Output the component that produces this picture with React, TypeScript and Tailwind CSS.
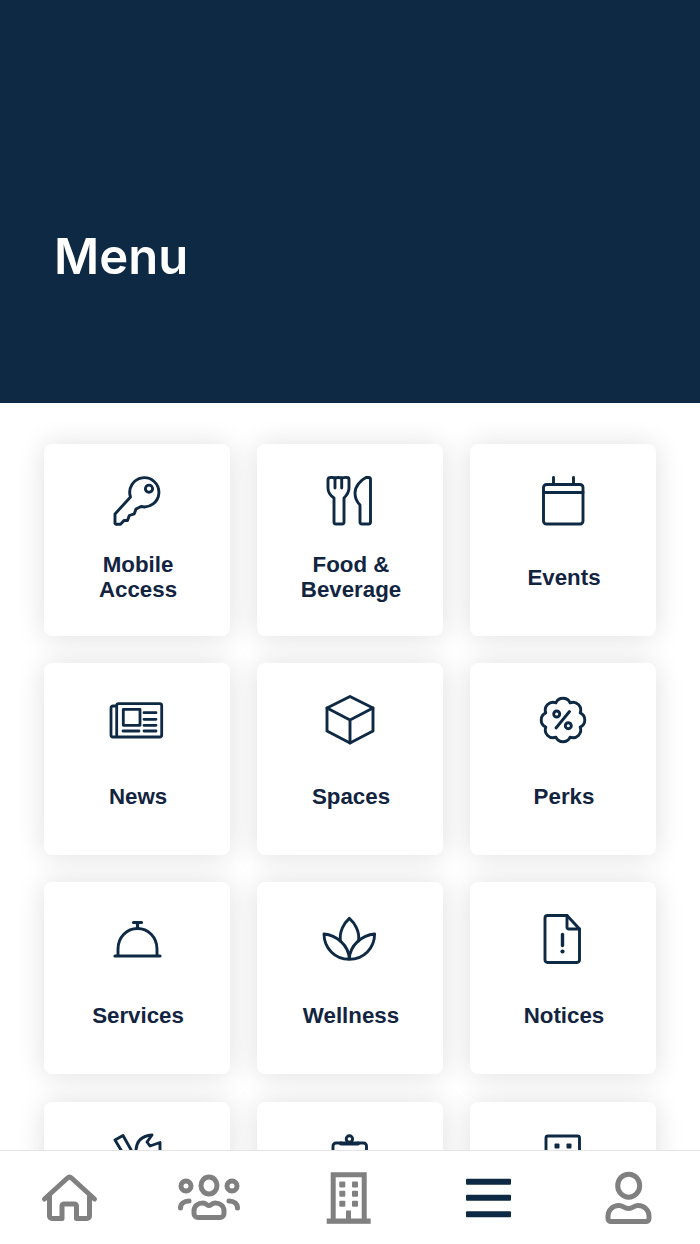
import type { ReactNode } from 'react'

const NAVY = '#0e2943'
const GREY = '#808080'

function flowerPath(cx: number, cy: number, r: number, n: number, bump: number) {
  let d = ''
  for (let i = 0; i <= n; i++) {
    const a = ((i - 0.5) / n) * Math.PI * 2 - Math.PI / 2
    const x = (cx + r * Math.cos(a)).toFixed(2)
    const y = (cy + r * Math.sin(a)).toFixed(2)
    d += i === 0 ? `M${x} ${y}` : `A${bump} ${bump} 0 0 1 ${x} ${y}`
  }
  return `${d}Z`
}

function Icon({ children, width = 2.9, color = NAVY }: { children: ReactNode; width?: number; color?: string }) {
  return (
    <svg
      viewBox="0 0 60 60"
      className="h-[60px] w-[60px] shrink-0 overflow-visible"
      fill="none"
      stroke={color}
      strokeWidth={width}
      strokeLinecap="round"
      strokeLinejoin="round"
    >
      {children}
    </svg>
  )
}

const KeyIcon = () => (
  <Icon>
    <path d="M8 53.5V44L23.5 27A14.6 14.6 0 1 1 34 36.5L29 39L27.3 43.8L22.3 45.5L20.5 50.5H17L13.5 54.3H8.8Z" />
    <circle cx="42" cy="18.7" r="3.6" />
  </Icon>
)

const FoodIcon = () => (
  <Icon>
    <path d="M10.5 7.5C12 7 13 7.5 14.8 8C16.5 7.5 20 7.5 21.8 8C23.5 7.5 25 7 27 7.5a2 2 0 0 1 2 2V18c0 5-3 8-5 10V52a2 2 0 0 1-2 2H16a2 2 0 0 1-2-2V28C11 26 8 23 8 18V10a2.5 2.5 0 0 1 2.5-2.5Z" />
    <path d="M15 8V18M21.7 8V18" />
    <path d="M48.5 7.5a2 2 0 0 1 2 2V52a2 2 0 0 1-2 2H42a2 2 0 0 1-2-2V35C38 33 35 28 35 23C35 16 41 10 46 7.5Z" />
  </Icon>
)

const EventsIcon = () => (
  <Icon>
    <rect x="10.5" y="14.5" width="39.5" height="39.5" rx="3" />
    <path d="M10.5 22.5H50M20.5 7.5V14.5M40.5 7.5V14.5" />
  </Icon>
)

const NewsIcon = () => (
  <Icon width={2.8}>
    <g transform="translate(0 1)">
      <path d="M9.7 16H6a2 2 0 0 0-2 2V45a2 2 0 0 0 2 2H52.7a2 2 0 0 0 2-2V15.7a2 2 0 0 0-2-2H11.7a2 2 0 0 0-2 2V47" />
      <rect x="16.3" y="19.3" width="16.7" height="16" />
      <path d="M37 22.7H49M37 29.3H49M37 35.3H49M16 41H32M37 41H49" />
    </g>
  </Icon>
)

const SpacesIcon = () => (
  <Icon>
    <path d="M30 7.5L53 19V42L30 54L7 42V19Z" />
    <path d="M7 19L30 31L53 19M30 31V54" />
  </Icon>
)

const PerksIcon = () => (
  <Icon>
    <path d={flowerPath(30, 31, 18.6, 8, 7.8)} />
    <circle cx="23.7" cy="25" r="3" />
    <circle cx="35.3" cy="36.7" r="3" />
    <path d="M36.5 22.5L23 39" />
  </Icon>
)

const ServicesIcon = () => (
  <Icon>
    <path d="M26.5 14.5H34.5M30.5 14.5V20" strokeWidth={3.2} />
    <path d="M11 47V41C11 29 20 20.5 30.5 20.5C41 20.5 50 29 50 41V47" />
    <path d="M8 48H53" strokeWidth={3.2} />
  </Icon>
)

const WellnessIcon = () => (
  <Icon>
    <path d="M4 26C4 40 15 51.3 29.3 51.3C43.7 51.3 54.6 40 54.6 26C42.5 27 29.6 37 29.3 51.3C29 37 16 27 4 26Z" />
    <path d="M20.5 33C19 24 24 15 29.3 10.3C35 15 40 24 38.5 33" />
  </Icon>
)

const NoticesIcon = () => (
  <Icon>
    <path d="M14.5 7.5H34L46.5 21V52a2.5 2.5 0 0 1-2.5 2.5H14.5A2.5 2.5 0 0 1 12 52V10a2.5 2.5 0 0 1 2.5-2.5Z" />
    <path d="M34 7.5V19a2 2 0 0 0 2 2H46.5" />
    <path d="M29.5 26.5V37.5" strokeWidth={3.4} />
    <circle cx="29.5" cy="43.5" r="2.1" fill={NAVY} stroke="none" />
  </Icon>
)

const ToolsIcon = () => (
  <Icon>
    <path d="M8 12L16 7.5L27 27M8 12L20 32" />
    <path d="M29 27C28 15 33 8 45 7L40 14L43 18L53 14.5V28" />
  </Icon>
)

const ClipboardIcon = () => (
  <Icon>
    <path d="M21 15H16a3 3 0 0 0-3 3V40M38 15H43.5a3 3 0 0 1 3 3V40" />
    <path d="M21 15.5H38" strokeWidth={4} />
    <circle cx="29.4" cy="11" r="3.2" />
  </Icon>
)

const BuildingIcon = () => (
  <Icon>
    <path d="M13 40V10a2 2 0 0 1 2-2H44.5a2 2 0 0 1 2 2V40" />
    <rect x="21.5" y="15.5" width="5" height="5" rx="1" fill={NAVY} stroke="none" />
    <rect x="33.5" y="15.5" width="5" height="5" rx="1" fill={NAVY} stroke="none" />
  </Icon>
)

const NavHome = () => (
  <Icon width={5} color={GREY}>
    <path d="M4.5 31L27.5 10a3 3 0 0 1 4 0L54.5 31" />
    <path d="M9.5 27V48a2.5 2.5 0 0 0 2.5 2.5H22V38a2 2 0 0 1 2-2H34.5a2 2 0 0 1 2 2V50.5H47a2.5 2.5 0 0 0 2.5-2.5V27" />
  </Icon>
)

const NavTeam = () => (
  <Icon width={5} color={GREY}>
    <ellipse cx="29" cy="17.5" rx="8" ry="8.5" />
    <circle cx="6" cy="18" r="5" />
    <circle cx="52" cy="18" r="5" />
    <path d="M19 49.5H40a4 4 0 0 0 4-4V43c0-5-4-8-9-8c-3 0-4 2.5-6 2.5c-2 0-3-2.5-6-2.5c-5 0-9 3-9 8V45.5a4 4 0 0 0 4 4Z" />
    <path d="M0.5 40C0.5 36 4 33 9 33M49 33C54 33 57.5 36 57.5 40" />
  </Icon>
)

const NavBuilding = () => (
  <Icon width={5} color={GREY}>
    <path d="M13.2 51V6.8H44.2V51" strokeLinecap="butt" strokeLinejoin="miter" />
    <rect x="6.7" y="50.5" width="44" height="5.3" fill={GREY} stroke="none" />
    <rect x="26" y="42.5" width="5" height="9" fill={GREY} stroke="none" />
    {[16.5, 25.8, 35.8].map(y => (
      <g key={y}>
        <rect x="19.3" y={y - 3} width="6" height="6" rx="1" fill={GREY} stroke="none" />
        <rect x="32" y={y - 3} width="6" height="6" rx="1" fill={GREY} stroke="none" />
      </g>
    ))}
  </Icon>
)

const NavMenu = () => (
  <Icon>
    <rect x="6" y="10.8" width="45" height="6" rx="1" fill={NAVY} stroke="none" />
    <rect x="6" y="26.8" width="45" height="6" rx="1" fill={NAVY} stroke="none" />
    <rect x="6" y="43.2" width="45" height="6" rx="1" fill={NAVY} stroke="none" />
  </Icon>
)

const NavPerson = () => (
  <Icon width={5} color={GREY}>
    <ellipse cx="28.7" cy="17.7" rx="11" ry="11.5" />
    <path d="M11 53.5H46a3 3 0 0 0 3-3V48c0-6-5-10.5-11-10.5c-4 0-5 3-9.5 3c-4.5 0-5.5-3-9.5-3c-6 0-11 4.5-11 10.5V50.5a3 3 0 0 0 3 3Z" />
  </Icon>
)

const items: { label?: ReactNode; icon: ReactNode }[] = [
  { label: <>Mobile<br />Access</>, icon: <KeyIcon /> },
  { label: <>Food &amp;<br />Beverage</>, icon: <FoodIcon /> },
  { label: 'Events', icon: <EventsIcon /> },
  { label: 'News', icon: <NewsIcon /> },
  { label: 'Spaces', icon: <SpacesIcon /> },
  { label: 'Perks', icon: <PerksIcon /> },
  { label: 'Services', icon: <ServicesIcon /> },
  { label: 'Wellness', icon: <WellnessIcon /> },
  { label: 'Notices', icon: <NoticesIcon /> },
  // last row is cut off by the tab bar, only the icon tops show
  { icon: <ToolsIcon /> },
  { icon: <ClipboardIcon /> },
  { icon: <BuildingIcon /> },
]

function Card({ label, icon }: { label?: ReactNode; icon: ReactNode }) {
  return (
    <div className="flex h-[192px] flex-col items-center rounded-lg bg-white pt-[26px] pb-3 shadow-[0_1px_28px_rgba(0,0,0,0.13)]">
      {icon}
      {label && (
        <div className="flex flex-1 items-center pl-0.5 text-center text-[22.3px] leading-[25px] font-bold text-[#12243f]">
          <span>{label}</span>
        </div>
      )}
    </div>
  )
}

export default function App() {
  return (
    <div className="flex h-[1244px] w-[700px] flex-col overflow-hidden bg-white font-['Liberation_Sans',sans-serif]">
      <header className="flex h-[403px] shrink-0 items-end bg-[#0e2943] pb-[116px] pl-[54px]">
        <h1 className="font-['Inter',sans-serif] text-[49px] leading-[60px] font-semibold text-white">Menu</h1>
      </header>
      <main className="min-h-0 flex-1 overflow-hidden px-[44px] pt-[41px]">
        <div className="grid grid-cols-3 gap-x-[27px] gap-y-[27.2px]">
          {items.map((item, i) => (
            <Card key={i} label={item.label} icon={item.icon} />
          ))}
        </div>
      </main>
      <nav className="grid h-[94px] shrink-0 grid-cols-5 border-t border-[#e4e4e4] bg-white">
        {[<NavHome />, <NavTeam />, <NavBuilding />, <NavMenu />, <NavPerson />].map((icon, i) => (
          <div key={i} className="flex items-center justify-center">
            {icon}
          </div>
        ))}
      </nav>
    </div>
  )
}
